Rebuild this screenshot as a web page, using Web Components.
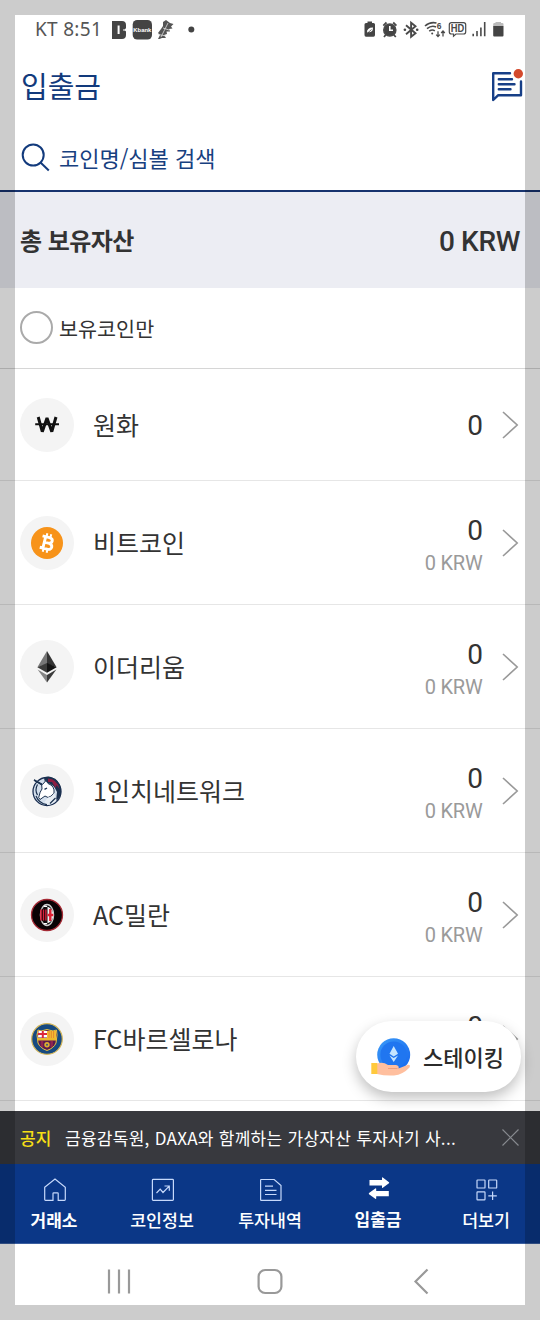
<!DOCTYPE html>
<html lang="ko">
<head>
<meta charset="utf-8">
<title>입출금</title>
<style>
html,body{margin:0;padding:0;background:#fff}
body{width:540px;height:1320px;overflow:hidden;font-family:"Noto Sans CJK KR","Noto Sans",sans-serif;color:#333}
</style>
</head>
<body>
<wallet-app>
  <status-bar></status-bar>
  <app-header>입출금</app-header>
  <search-box>코인명/심볼 검색</search-box>
  <asset-total amount="0 KRW">총 보유자산</asset-total>
  <owned-filter>보유코인만</owned-filter>
  <coin-list>
    <coin-row class="short" icon="krw" amount="0">원화</coin-row>
    <coin-row icon="btc" amount="0" value="0 KRW">비트코인</coin-row>
    <coin-row icon="eth" amount="0" value="0 KRW">이더리움</coin-row>
    <coin-row icon="inch" amount="0" value="0 KRW">1인치네트워크</coin-row>
    <coin-row icon="acm" amount="0" value="0 KRW">AC밀란</coin-row>
    <coin-row icon="bar" amount="0">FC바르셀로나</coin-row>
  </coin-list>
  <staking-button slot="float">스테이킹</staking-button>
  <notice-bar label="공지">금융감독원, DAXA와 함께하는 가상자산 투자사기 사...</notice-bar>
  <tab-bar>
    <tab-item icon="home" class="bold">거래소</tab-item>
    <tab-item icon="chart">코인정보</tab-item>
    <tab-item icon="doc">투자내역</tab-item>
    <tab-item icon="swap" class="bold up">입출금</tab-item>
    <tab-item icon="more">더보기</tab-item>
  </tab-bar>
  <system-nav></system-nav>
</wallet-app>
<script>
function define(name, render){
  customElements.define(name, class extends HTMLElement{
    constructor(){ super(); this.attachShadow({mode:'open'}); }
    connectedCallback(){ this.shadowRoot.innerHTML = render(this); }
  });
}

const coinIcons = {
  krw:`<path d="M15.2 26.2H39" stroke="#111" stroke-width="2"/><path d="M18.2 19 22.3 33.7 27 20 31.8 33.7 36 19" fill="none" stroke="#111" stroke-width="3" stroke-linejoin="bevel"/>`,
  btc:`<circle cx="27" cy="27" r="16" fill="#f7931a"/><g transform="rotate(14 27 27)" fill="none" stroke="#fff" stroke-width="2.9"><path d="M21 21.2H28.2Q31.6 21.5 31.6 24T28.2 26.8H24.2M28.4 26.8Q32.6 27 32.6 30T28.4 32.9H21M24.2 21V33"/><path d="M25 17.5V21M29 17.5V21M25 33V36.5M29 33V36.5" stroke-width="2"/></g>`,
  eth:`<path d="M27 11 17.4 27.2 27 24Z" fill="#777"/><path d="M27 11 36.6 27.2 27 24Z" fill="#343434"/><path d="M17.4 27.2 27 23 27 32.8Z" fill="#3c3c3b"/><path d="M36.6 27.2 27 23 27 32.8Z" fill="#141414"/><path d="M17.6 29.6 27 35 27 42.5Z" fill="#858585"/><path d="M36.4 29.6 27 35 27 42.5Z" fill="#3b3b3b"/>`,
  inch:`<circle cx="27" cy="27.5" r="14" fill="#d3deeb" stroke="#1b2f52" stroke-width="1.3"/><path d="M24 14.5Q27 11 32 13.5Q39 15 41 25Q42 33 36 37L37 28Q34 20 25 18Z" fill="#1b314f"/><path d="M28 14.5Q37 15 39.5 25L36.5 21 35.5 24 32 18 28 18Z" fill="#8c1e42"/><path d="M14 16 22.5 20.5 26 16.5 28 19.5Q35 22 34 29 31 33 28 33.5L25 32 20 35.5 18.7 33.5Q20 27 22 25L21.7 21Z" fill="#fff" stroke="#1b314f" stroke-width="1"/><path d="M28 33.5Q32 33 34 29L36.5 36Q33 40.5 27 41L24.5 38Z" fill="#e7edf4"/><path d="M16 32Q19 39.5 27 40.7M17.5 20.5Q14.5 26 17.5 31M30 39.5 35.5 34" fill="none" stroke="#1b314f" stroke-width="1.2"/><path d="M14 16 22 20.5" stroke="#1b314f" stroke-width="1.8"/><path d="M24.5 25.3 27 24" stroke="#1b314f" stroke-width="1.4"/>`,
  acm:`<circle cx="27" cy="27" r="15.5" fill="#0a0305" stroke="#a52a35" stroke-width="1.3"/><ellipse cx="27" cy="27" rx="6.6" ry="10.5" fill="#111" stroke="#ccc" stroke-width="1.3"/><path d="M20.2 21.5H26.6V32.5H20.2Z" fill="#d9203a"/><path d="M22.3 21V33M24.7 18.5V35.5" stroke="#160508" stroke-width="1"/><path d="M27.5 18.5Q33.2 21 33.3 27 33.3 33 27.5 35.5Z" fill="#f2f2f2"/><path d="M27.5 27H33.3M30.3 21V33" stroke="#df2034" stroke-width="2.4"/><path d="M24 18.3H27M24 35.7H27" stroke="#fff" stroke-width="1.3"/>`,
  bar:`<circle cx="27" cy="27" r="15.3" fill="#174a80" stroke="#d3b65a" stroke-width="1.2"/><path d="M18 18 21 19 27 17.5 33 19 36.5 18 37 23 36 31Q34 36 27 38.5 20 36 18 31L17 23Z" fill="#5a194e" stroke="#ebc341" stroke-width="1"/><path d="M18.5 19H27V25.5H18Z" fill="#fff"/><path d="M22.8 19V26M18 22H27" stroke="#dc273b" stroke-width="2"/><path d="M27 19H36V26H27Z" fill="#f3bd32"/><path d="M29 19V26M31.3 19V26M33.6 19V26" stroke="#e07a2e" stroke-width=".8"/><path d="M18 26H36.5V28.6H18Z" fill="#edb92c"/><path d="M22 29V35M31.7 29V35" stroke="#8f2550" stroke-width="2.5"/><circle cx="27" cy="32.7" r="2.7" fill="#dfad2e"/><circle cx="27" cy="32.7" r="1" fill="#31528b"/>`
};
const tabIcons = {
  home:`<path d="M1.7 9.2 12 1 22.3 9.2V21.5Q22.3 22.3 21.5 22.3H15.2V15.5Q15.2 14.8 14.5 14.8H10.7Q10 14.8 10 15.5V22.3H2.5Q1.7 22.3 1.7 21.5Z"/>`,
  chart:`<rect x="1.4" y="1.4" width="21" height="21" rx=".8"/><path d="M5.5 15 9.2 11.2 12 14.5 18.2 8.2M13.5 8H18.3V12.8"/>`,
  doc:`<path d="M2.2 1.5H15.2L22 7.5V21.8Q22 22.4 21.4 22.4H2.2Q1.6 22.4 1.6 21.8V2.1Q1.6 1.5 2.2 1.5ZM6 8.2H14M6 12.4H17.5M6 16.5H17.5"/>`,
  swap:`<path stroke="none" fill="#fff" d="M2.5 3.1H15V.7Q15-.1 15.8.4L22 5.2Q22.4 5.7 22 6.2L15.8 10.8Q15 11.2 15 10.4V8.4H2.5ZM21.8 14H9.2V11.8Q9 11 8.3 11.4L2 16Q1.6 16.6 2 17.2L8.3 21.8Q9 22.2 9.2 21.4V19.2H21.8Z"/>`,
  more:`<rect x="2" y="2" width="8" height="8" rx=".6"/><rect x="13.7" y="2" width="8" height="8" rx=".6"/><rect x="2" y="13.8" width="8" height="8" rx=".6"/><path d="M13.3 17.8H21.8M17.6 13.5V22"/>`
};

define('wallet-app',()=>`<style>
  :host{display:flex;flex-direction:column;position:relative;width:540px;height:1320px;background:#fff;overflow:hidden;padding-top:15px;box-sizing:border-box}
  .frame{position:absolute;inset:0;border:15px solid rgba(0,0,0,.2);pointer-events:none;z-index:5}
  .float{position:absolute;left:356px;top:1021px;z-index:2}
  </style><slot></slot><div class="float"><slot name="float"></slot></div><div class="frame"></div>`);

define('status-bar',()=>`<style>
  :host{display:flex;height:30px;padding:0 35px;align-items:center;font:19px/28px "Noto Sans",sans-serif;color:#555}
  .time{width:76px;white-space:nowrap;letter-spacing:.3px;padding-bottom:2px}
  svg{display:block} .right{margin-left:auto}
  .kb{font:bold 6px "Liberation Sans";fill:#fff} .hd{font:bold 10.5px "Liberation Sans";fill:#4a4a4a} .six{font:bold 8.5px "Liberation Sans";fill:#4a4a4a}
  </style>
  <span class="time">KT 8:51</span>
  <svg width="90" height="30" viewBox="111 15 90 30">
    <path fill="#444" d="M112 21H122Q126 21 126 25V28L124.5 30 126 31.5V35Q126 39 122 39H112Z"/><path d="M118.6 25.5V34" stroke="#fff" stroke-width="2"/><path d="M124 29V31" stroke="#fff" stroke-width="1"/>
    <rect x="132.7" y="20" width="19.3" height="19.5" rx="4.5" fill="#444"/><text class="kb" x="133.3" y="32" textLength="18" lengthAdjust="spacingAndGlyphs">Kbank</text>
    <path fill="#555" d="M166 20 170 23 173.5 24 171 26.5 172.5 28.5 169 29 170 31.5 166.5 31.5 167 34 164 35 166 38H162L159.5 39H158L160 35 158 33 161 29 163 26 163 22Z"/><path d="M168 23 161 37M158.5 34.5 166 36M163 28 169 30" stroke="#ddd" stroke-width=".8"/>
    <circle cx="191.3" cy="29.5" r="3" fill="#444"/>
  </svg>
  <svg class="right" width="145" height="30" viewBox="360.5 15 145 30" fill="none" stroke="#4a4a4a" stroke-width="1.6">
    <path fill="#444" stroke="none" d="M365 24.5Q365 23 366.5 23H368V21.5H372.5V23H374Q375.5 23 375.5 24.5V35Q375.5 36.7 374 36.7H366.5Q365 36.7 365 35Z"/><path d="M367.5 33Q367 27.5 373.5 27.5 373.5 33 368.5 32Z" fill="#fff" stroke="none"/><path d="M367 34 372 29.5" stroke-width=".8"/>
    <circle cx="390.3" cy="30" r="6" fill="#444"/><path d="M383.8 25.7 387 22.5M393.7 22.5 396.9 25.7M386.5 34.5 384.5 37M394 34.5 396.3 37" stroke-width="1.8"/><path d="M390.3 26V30.2H393.5" stroke="#fff"/>
    <path d="M406.5 25.3 416 33.2 411.6 36.7V22.7L416 26.2 406.5 34.2" stroke-width="1.9"/><circle cx="405.4" cy="29.7" r="1.3" fill="#444" stroke="none"/><circle cx="417.7" cy="29.7" r="1.3" fill="#444" stroke="none"/>
    <path d="M425.5 26Q430.5 21.5 437 23M427.5 28.7Q432 25 436.5 27M429.7 31.2Q432.8 29 435.3 30.8"/><circle cx="432.7" cy="33.5" r="1" fill="#444" stroke="none"/><text class="six" x="437.3" y="29" stroke="none">6</text><path d="M438.5 31.3V36.2M436.7 34.6 438.5 36.6 440.3 34.6M443.5 36.5V31.5M441.7 33 443.5 31 445.3 33" stroke-width="1.3"/>
    <path d="M452 22.6H464Q466.2 22.6 466.2 24.8V31.7Q466.2 34 464 34H456.5L454 36.2V34H452Q449.8 34 449.8 31.7V24.8Q449.8 22.6 452 22.6Z" stroke-width="1.2"/><text class="hd" stroke="none" x="451.2" y="32.1" textLength="13.5" lengthAdjust="spacingAndGlyphs">HD</text>
    <path d="M473.7 33.7V36.3M477.5 31V36.3M481.4 27.5V36.3M485.2 22V36.3" stroke-width="1.6"/>
    <path fill="#bbb" stroke="none" d="M493.7 26V24Q493.7 23 495 23H496V22H501.5V23H502.7Q504 23 504 24V26Z"/><path fill="#444" stroke="none" d="M493.7 26H504V35.5Q504 36.5 503 36.5H494.7Q493.7 36.5 493.7 35.5Z"/>
  </svg>`);

define('app-header',()=>`<style>
  :host{display:flex;height:84px;padding:0 15px 4px 21px;align-items:center;justify-content:space-between;color:#123a7c;font-size:29px;line-height:40px;letter-spacing:0;box-sizing:border-box}
  svg{display:block}</style><span><slot></slot></span>
  <svg width="36" height="38" viewBox="489 66 36 38" fill="none" stroke="#173f87" stroke-width="2.4" stroke-linecap="round" stroke-linejoin="round"><path d="M510 73.3H493.2V100L498 95.3H521V81.5"/><path d="M498.8 79.2H512M498.8 84.3H514.5M498.8 89.3H510.5"/><circle cx="518.3" cy="73.7" r="4.7" fill="#d4492c" stroke="none"/></svg>`);

define('search-box',()=>`<style>
  :host{display:flex;height:63px;padding:0 21px 5px;align-items:center;gap:9px;color:#17407f;font-size:22px;line-height:32px;box-sizing:border-box;border-bottom:2px solid #17336e}
  svg{display:block}</style>
  <svg width="29" height="30" viewBox="21 143 29 30" fill="none" stroke="#123a7c" stroke-width="2"><circle cx="33.2" cy="156" r="10.5"/><path d="M40.5 163.5 48.8 171.5"/></svg><span><slot></slot></span>`);

define('asset-total',el=>`<style>
  :host{display:flex;height:96px;padding:0 20px;align-items:center;justify-content:space-between;background:#ecedf3;color:#333;box-sizing:border-box}
  span{font-size:24px;line-height:32px;font-weight:700;letter-spacing:-.55px}
  b{font:500 28px/34px Roboto,sans-serif;letter-spacing:-.35px;padding-top:3px}
  </style><span><slot></slot></span><b>${el.getAttribute('amount')}</b>`);

define('owned-filter',()=>`<style>
  :host{display:flex;height:81px;padding:0 20px 1px;align-items:center;gap:6px;border-bottom:1px solid #d6d6d6;box-sizing:border-box;font-size:20.7px;line-height:30px}
  i{width:33px;height:33px;box-sizing:border-box;border:2px solid #aaa;border-radius:50%}
  </style><i></i><span><slot></slot></span>`);

define('coin-list',()=>`<style>:host{display:block;height:742px;overflow:hidden}</style><slot></slot>`);

define('coin-row',el=>`<style>
  :host{display:flex;height:124px;border-bottom:1px solid #e6e6e6;box-sizing:border-box;align-items:center;padding:0 21px 0 20px}
  :host(.short){height:112px}
  .coin{width:54px;height:54px;background:#f4f4f4;border-radius:50%;margin-right:19px}
  .name{font-size:25px;line-height:36px;flex:1;white-space:nowrap;padding-bottom:2px}
  .val{display:flex;flex-direction:column;align-items:flex-end;align-self:flex-start;padding-top:33px;margin-right:19px}
  :host(.short) .val{padding-top:40px}
  b{font:400 28px/34px Roboto,sans-serif;color:#333}
  small{font:400 20px/30px Roboto,sans-serif;color:#9a9a9a;margin-right:.5px;letter-spacing:-.2px}
  .chev{display:block}
  </style>
  <svg class="coin" viewBox="0 0 54 54">${coinIcons[el.getAttribute('icon')]}</svg>
  <span class="name"><slot></slot></span>
  <span class="val"><b>${el.getAttribute('amount')}</b>${el.hasAttribute('value')?`<small>${el.getAttribute('value')}</small>`:''}</span>
  <svg class="chev" width="17" height="28" viewBox="0 0 17 28" fill="none" stroke="#999" stroke-width="1.6"><path d="M1 1 15.2 14 1 27"/></svg>`);

define('staking-button',()=>`<style>
  :host{display:flex;width:165px;height:71px;box-sizing:border-box;border-radius:36px;background:#fff;box-shadow:0 6px 14px rgba(0,0,0,.25);align-items:center;padding-left:14px;gap:12px;font-size:22px;line-height:32px;font-weight:500;color:#2b2b2b}
  svg{display:block} span{padding-bottom:2px}</style>
  <svg width="41" height="42" viewBox="370 1035 41 42"><defs><linearGradient id="g" x2="1" y2="1"><stop stop-color="#3a9af8"/><stop offset="1" stop-color="#1767ed"/></linearGradient></defs>
  <circle cx="393.7" cy="1053.7" r="16.5" fill="url(#g)"/><circle cx="393.7" cy="1053.7" r="13.3" fill="#2076f0"/>
  <path fill="#c5e5ff" d="M393.7 1045 398 1052.8 393.7 1055.5 389.5 1052.8ZM389.5 1054.5 393.7 1057 398 1054.5 393.7 1061Z"/>
  <path fill="#ffbf9e" d="M377 1062.5Q383 1060.5 388 1064H396Q399.5 1064.5 398.5 1067.5L408 1063.7Q411 1063.5 409.5 1066.5 403 1073.5 394 1074.5 385 1075 377 1073Z"/><path d="M388 1067.5H397.5" stroke="#ef9e7d" stroke-width="1"/><path fill="#ffc93d" d="M371.3 1062H377.3V1073H371.3Z"/></svg><span><slot></slot></span>`);

define('notice-bar',el=>`<style>
  :host{display:flex;height:53px;padding:0 20px;align-items:center;background:#38393e;color:#fff;font-size:17px;line-height:26px;box-sizing:border-box;white-space:nowrap}
  b{font-weight:500;color:#f6df16;margin-right:13px;width:32px} svg{margin-left:auto}
  span{letter-spacing:.28px}
  </style><b>${el.getAttribute('label')}</b><span><slot></slot></span>
  <svg width="19" height="19" viewBox="0 0 19 19" stroke="#888b90" stroke-width="1.2"><path d="M1.5 1.5 17.5 17.5M17.5 1.5 1.5 17.5"/></svg>`);

define('tab-bar',()=>`<style>:host{display:grid;grid-template-columns:repeat(5,108px);height:80px;background:#0b3787;box-sizing:border-box;border-bottom:1px solid #3b5fa0}</style><slot></slot>`);

define('tab-item',el=>`<style>
  :host{display:flex;flex-direction:column;align-items:center;padding-top:14px;font-size:17.3px;line-height:26px;font-weight:500;color:#fff}
  :host(.bold){font-weight:700;font-size:17px}
  :host(.up){padding-top:13px}
  svg{display:block;margin:0 0 5px;overflow:visible;transform:translateX(1px)}
  </style><svg width="24" height="24" viewBox="0 0 24 24" fill="none" stroke="#c7d9fb" stroke-width="1.2">${tabIcons[el.getAttribute('icon')]}</svg><span><slot></slot></span>`);

define('system-nav',()=>`<style>
  :host{display:grid;grid-template-columns:28px 28px 28px;justify-content:center;column-gap:123px;height:76px;box-sizing:border-box;padding-top:24px}
  svg{display:block}
  </style>
  <svg width="28" height="28" viewBox="0 0 28 28" stroke="#999" stroke-width="2.2"><path d="M4 1.5V25.5M14 1.5V25.5M24 1.5V25.5"/></svg>
  <svg width="28" height="28" viewBox="0 0 28 28" fill="none" stroke="#999" stroke-width="2.2"><rect x="2.6" y="2" width="22.8" height="23" rx="6.5"/></svg>
  <svg width="28" height="28" viewBox="0 0 28 28" fill="none" stroke="#999" stroke-width="2.2"><path d="M20.5 1.5 8.5 13.5 20.5 25.5"/></svg>`);
</script>
</body>
</html>
